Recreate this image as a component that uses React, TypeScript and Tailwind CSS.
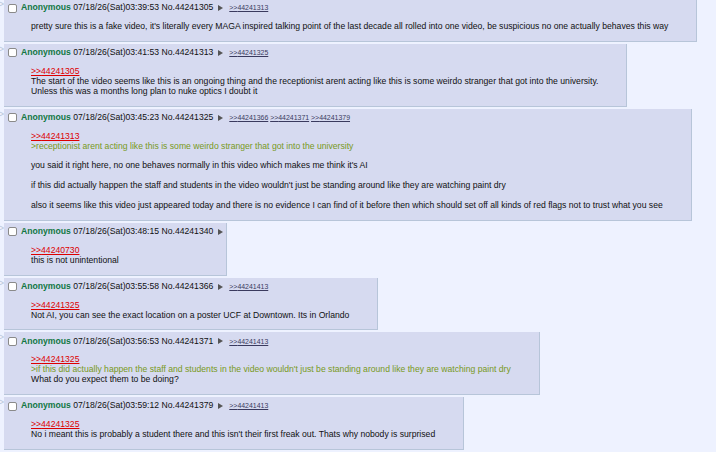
type Line =
  | { kind: "quote"; no: string }
  | { kind: "green"; text: string }
  | { kind: "text"; text: string }
  | { kind: "gap" };

type Post = {
  no: string;
  time: string;
  backlinks: string[];
  lines: Line[];
};

const posts: Post[] = [
  {
    no: "44241305",
    time: "07/18/26(Sat)03:39:53",
    backlinks: ["44241313"],
    lines: [
      {
        kind: "text",
        text: "pretty sure this is a fake video, it's literally every MAGA inspired talking point of the last decade all rolled into one video, be suspicious no one actually behaves this way",
      },
    ],
  },
  {
    no: "44241313",
    time: "07/18/26(Sat)03:41:53",
    backlinks: ["44241325"],
    lines: [
      { kind: "quote", no: "44241305" },
      {
        kind: "text",
        text: "The start of the video seems like this is an ongoing thing and the receptionist arent acting like this is some weirdo stranger that got into the university.",
      },
      { kind: "text", text: "Unless this was a months long plan to nuke optics I doubt it" },
    ],
  },
  {
    no: "44241325",
    time: "07/18/26(Sat)03:45:23",
    backlinks: ["44241366", "44241371", "44241379"],
    lines: [
      { kind: "quote", no: "44241313" },
      {
        kind: "green",
        text: ">receptionist arent acting like this is some weirdo stranger that got into the university",
      },
      { kind: "gap" },
      {
        kind: "text",
        text: "you said it right here, no one behaves normally in this video which makes me think it's AI",
      },
      { kind: "gap" },
      {
        kind: "text",
        text: "if this did actually happen the staff and students in the video wouldn't just be standing around like they are watching paint dry",
      },
      { kind: "gap" },
      {
        kind: "text",
        text: "also it seems like this video just appeared today and there is no evidence I can find of it before then which should set off all kinds of red flags not to trust what you see",
      },
    ],
  },
  {
    no: "44241340",
    time: "07/18/26(Sat)03:48:15",
    backlinks: [],
    lines: [
      { kind: "quote", no: "44240730" },
      { kind: "text", text: "this is not unintentional" },
    ],
  },
  {
    no: "44241366",
    time: "07/18/26(Sat)03:55:58",
    backlinks: ["44241413"],
    lines: [
      { kind: "quote", no: "44241325" },
      {
        kind: "text",
        text: "Not AI, you can see the exact location on a poster UCF at Downtown. Its in Orlando",
      },
    ],
  },
  {
    no: "44241371",
    time: "07/18/26(Sat)03:56:53",
    backlinks: ["44241413"],
    lines: [
      { kind: "quote", no: "44241325" },
      {
        kind: "green",
        text: ">if this did actually happen the staff and students in the video wouldn't just be standing around like they are watching paint dry",
      },
      { kind: "text", text: "What do you expect them to be doing?" },
    ],
  },
  {
    no: "44241379",
    time: "07/18/26(Sat)03:59:12",
    backlinks: ["44241413"],
    lines: [
      { kind: "quote", no: "44241325" },
      {
        kind: "text",
        text: "No i meant this is probably a student there and this isn't their first freak out. Thats why nobody is surprised",
      },
    ],
  },
];

function MessageLine({ line }: { line: Line }) {
  if (line.kind === "gap") return <div className="h-[9.9px]" />;
  if (line.kind === "quote")
    return (
      <div>
        <a className="text-[#dd0000] underline decoration-[0.5px] underline-offset-[1px]">
          &gt;&gt;{line.no}
        </a>
      </div>
    );
  if (line.kind === "green")
    return <div className="text-[#789922]">{line.text}</div>;
  return <div>{line.text}</div>;
}

function Reply({ post }: { post: Post }) {
  return (
    <div className="flex items-start">
      {/* side arrows, mostly pushed off the left edge */}
      <div className="flex w-[4px] shrink-0 justify-end overflow-hidden pt-[1px] text-[#b7c5d9]">
        <span className="shrink-0 leading-[8px]">&gt;&gt;</span>
      </div>
      <div className="w-fit border-r border-b border-[#b7c5d9] bg-[#d6daf0] pt-[4px] pr-[2px] pl-[1px]">
        <div className="flex h-[10px] items-center whitespace-nowrap">
          <span className="mr-[4px] ml-[3px] h-[9px] w-[9px] shrink-0 rounded-[2px] border border-[#8a8a8a] bg-white" />
          <span className="font-bold text-[#117743]">Anonymous</span>
          <span className="ml-[2.4px]">
            {post.time} No.{post.no}
          </span>
          <svg
            width="5"
            height="6"
            viewBox="0 0 5 6"
            className="mr-[1px] ml-[5px] shrink-0"
          >
            <polygon points="0,0 5,3 0,6" fill="#555" />
          </svg>
          {post.backlinks.length > 0 && (
            <span className="ml-[5px] flex gap-[1.9px] text-[6.95px]">
              {post.backlinks.map((b) => (
                <a
                  key={b}
                  className="text-[#3a3a5e] underline decoration-[0.5px]"
                >
                  &gt;&gt;{b}
                </a>
              ))}
            </span>
          )}
        </div>
        <div className="mt-[9px] mr-[26px] mb-[9px] ml-[26px] whitespace-nowrap">
          {post.lines.map((l, i) => (
            <MessageLine key={i} line={l} />
          ))}
        </div>
      </div>
    </div>
  );
}

export default function App() {
  return (
    <div
      className="min-h-screen overflow-hidden bg-[#eef2ff] text-[8.65px] leading-[9.9px] text-[#111]"
      style={{ fontFamily: '"Liberation Sans", Arial, Helvetica, sans-serif' }}
    >
      <div className="-mt-px flex flex-col gap-[2px]">
        {posts.map((p) => (
          <Reply key={p.no} post={p} />
        ))}
      </div>
    </div>
  );
}
